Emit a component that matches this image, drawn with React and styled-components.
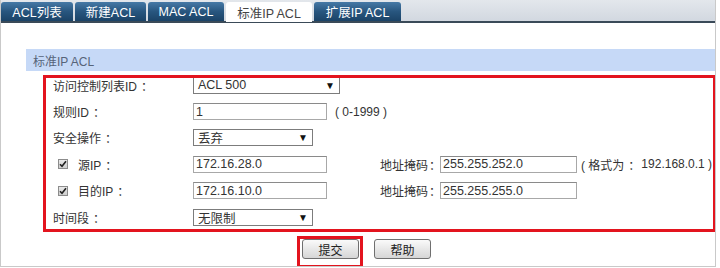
import React from "react";
import styled, { createGlobalStyle } from "styled-components";

const Global = createGlobalStyle`
  html, body { margin: 0; padding: 0; background: #fff; }
  body { font-family: "Liberation Sans", "Noto Sans CJK SC", sans-serif; font-size: 12px; color: #333; }
`;

const Frame = styled.div`
  width: 714px;
  height: 266px;
  border-left: 1px solid #c9c9c9;
  border-right: 1px solid #c9c9c9;
  border-bottom: 1px solid #c9c9c9;
  position: relative;
  overflow: hidden;
`;

const TabBar = styled.div`
  height: 21px;
  display: flex;
  align-items: flex-end;
  gap: 2px;
  background: linear-gradient(#e3e7ec, #d2d8e0);
  border-bottom: 2px solid #3a4a58;
`;

const Tab = styled.div`
  width: ${(p) => p.w}px;
  height: ${(p) => (p.active ? 20 : 19)}px;
  display: flex;
  align-items: center;
  justify-content: center;
  font-size: 12.5px;
  border-radius: 3px 3px 0 0;
  color: ${(p) => (p.active ? "#444" : "#fff")};
  background: ${(p) =>
    p.active ? "#fff" : "linear-gradient(#4679a6, #28567f 50%, #1b4367)"};
  margin-bottom: ${(p) => (p.active ? -1 : 0)}px;
`;

const Band = styled.div`
  margin: 26px 0 0 25px;
  height: 22px;
  background: #c6d9f7;
  color: #566479;
  display: flex;
  align-items: center;
  padding-left: 7px;
`;

const FormArea = styled.div`
  position: relative;
  margin-top: 1px;
  padding-left: 52px;
`;

const Row = styled.div`
  height: 26.4px;
  display: flex;
  align-items: center;
`;

const Label = styled.div`
  width: 140px;
  display: flex;
  align-items: center;
  padding-left: ${(p) => (p.indent ? 5 : 0)}px;
  box-sizing: border-box;
`;

const Colon = styled.span`
  margin-left: ${(p) => (p.ml === undefined ? 4 : p.ml)}px;
  margin-right: ${(p) => p.mr || 0}px;
`;

const Check = styled.span`
  width: 10px;
  height: 10px;
  border: 1px solid #8c8c8c;
  background: linear-gradient(#e9e9e9, #cfcfcf);
  display: inline-flex;
  align-items: center;
  justify-content: center;
  margin-right: 10px;
  box-sizing: border-box;
`;

const Input = styled.input`
  width: ${(p) => p.w || 134}px;
  height: 17px;
  box-sizing: border-box;
  border: 1px solid #a8a8a8;
  border-top-color: #8a8a8a;
  padding: 0 2px;
  font-family: inherit;
  font-size: 12.5px;
  color: #333;
  outline: none;
  margin: 0;
`;

const Select = styled.div`
  width: ${(p) => p.w}px;
  height: 17px;
  box-sizing: border-box;
  border: 1px solid #7c7c7c;
  background: #fff;
  display: flex;
  align-items: center;
  justify-content: space-between;
  padding: 0 4px 0 4px;
  font-size: 12.5px;
`;

const Arrow = styled.span`
  font-size: 10px;
  color: #111;
`;

const Note = styled.span`
  margin-left: ${(p) => p.ml || 8}px;
  white-space: nowrap;
  display: flex;
  align-items: center;
`;

const Mask = styled.span`
  margin-left: 53px;
  width: 60px;
  white-space: nowrap;
  display: flex;
  align-items: center;
`;

const Annotation = styled.div`
  position: absolute;
  border: 3px solid #e3141e;
  box-sizing: border-box;
  pointer-events: none;
`;

const Buttons = styled.div`
  position: relative;
  display: flex;
  gap: 15px;
  padding-left: 301px;
  margin-top: 9px;
`;

const Button = styled.button`
  width: 57px;
  height: 20px;
  border: 1px solid #6f6f6f;
  border-radius: 3px;
  background: linear-gradient(#fafafa, #e4e4e4 60%, #d6d6d6);
  font-family: inherit;
  font-size: 12px;
  color: #222;
  padding: 0;
`;

const CheckMark = () => (
  <svg width="8" height="8" viewBox="0 0 8 8">
    <path d="M1 4.2 L3 6.3 L7 1.2" fill="none" stroke="#222" strokeWidth="1.6" />
  </svg>
);

export default function App() {
  return (
    <>
      <Global />
      <Frame>
        <TabBar>
          <Tab w={72}>ACL列表</Tab>
          <Tab w={71}>新建ACL</Tab>
          <Tab w={76}>MAC ACL</Tab>
          <Tab w={86} active>标准IP ACL</Tab>
          <Tab w={87}>扩展IP ACL</Tab>
        </TabBar>
        <Band>标准IP ACL</Band>
        <FormArea>
          <Row>
            <Label>访问控制列表ID<Colon>：</Colon></Label>
            <Select w={147}>
              <span>ACL 500</span>
              <Arrow>▼</Arrow>
            </Select>
          </Row>
          <Row>
            <Label>规则ID<Colon>：</Colon></Label>
            <Input defaultValue="1" readOnly />
            <Note>( 0-1999 )</Note>
          </Row>
          <Row>
            <Label>安全操作<Colon>：</Colon></Label>
            <Select w={120}>
              <span>丢弃</span>
              <Arrow>▼</Arrow>
            </Select>
          </Row>
          <Row>
            <Label indent>
              <Check><CheckMark /></Check>源IP<Colon>：</Colon>
            </Label>
            <Input defaultValue="172.16.28.0" readOnly />
            <Mask>地址掩码<Colon ml={1}>：</Colon></Mask>
            <Input w={137} defaultValue="255.255.252.0" readOnly />
            <Note ml={4}>( 格式为<Colon mr={1}>：</Colon>192.168.0.1 )</Note>
          </Row>
          <Row>
            <Label indent>
              <Check><CheckMark /></Check>目的IP<Colon>：</Colon>
            </Label>
            <Input defaultValue="172.16.10.0" readOnly />
            <Mask>地址掩码<Colon ml={1}>：</Colon></Mask>
            <Input w={137} defaultValue="255.255.255.0" readOnly />
          </Row>
          <Row>
            <Label>时间段<Colon>：</Colon></Label>
            <Select w={120}>
              <span>无限制</span>
              <Arrow>▼</Arrow>
            </Select>
          </Row>
          <Annotation style={{ left: 42, top: 3, width: 673, height: 157 }} />
        </FormArea>
        <Buttons>
          <Button>提交</Button>
          <Button>帮助</Button>
          <Annotation style={{ left: 296, top: -3, width: 66, height: 32 }} />
        </Buttons>
      </Frame>
    </>
  );
}
